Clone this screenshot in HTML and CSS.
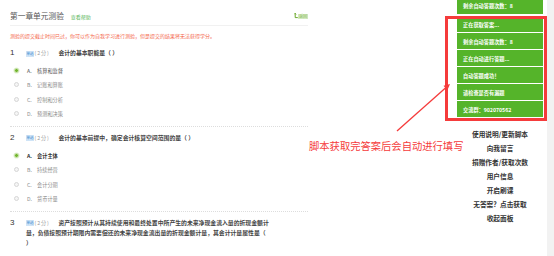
FILE: index.html
```html
<!DOCTYPE html>
<html lang="zh-CN">
<head>
<meta charset="utf-8">
<title>第一章单元测验</title>
<link rel="stylesheet" href="styles.css">
</head>
<body>
<div class="page">
  <main class="main">
    <div class="title-row">
      <h1 class="title">第一章单元测验</h1>
      <a class="help">查看帮助</a>
      <a class="back">
        <svg class="back-icon" width="4" height="6" viewBox="0 0 4 6"><path d="M1.2 0.3 V4.6 H3.8 M0.2 1.3 L1.2 0.3 L2.2 1.3" fill="none" stroke="#6aa82a" stroke-width="1"/></svg>
        <span class="back-text">返回</span>
      </a>
    </div>
    <p class="notice">测验的提交截止时间已过，你可以作为自我学习进行测验，但是提交的结果将无法获得学分。</p>

    <section class="question">
      <div class="q-head">
        <span class="q-num">1</span>
        <div class="q-body"><span class="badge"><span class="badge-text">单选</span></span><span class="score">(2分)</span><span class="q-text">会计的基本职能是（ ）</span></div>
      </div>
      <ul class="options">
        <li class="option checked"><span class="radio"></span><span class="letter">A.</span><span>核算和监督</span></li>
        <li class="option"><span class="radio"></span><span class="letter">B.</span><span>记账和算账</span></li>
        <li class="option"><span class="radio"></span><span class="letter">C.</span><span>控制和分析</span></li>
        <li class="option"><span class="radio"></span><span class="letter">D.</span><span>预测和决策</span></li>
      </ul>
    </section>

    <section class="question">
      <div class="q-head">
        <span class="q-num">2</span>
        <div class="q-body"><span class="badge"><span class="badge-text">单选</span></span><span class="score">(2分)</span><span class="q-text">会计的基本前提中，确定会计核算空间范围的是（ ）</span></div>
      </div>
      <ul class="options">
        <li class="option checked strong"><span class="radio"></span><span class="letter">A.</span><span>会计主体</span></li>
        <li class="option"><span class="radio"></span><span class="letter">B.</span><span>持续经营</span></li>
        <li class="option"><span class="radio"></span><span class="letter">C.</span><span>会计分期</span></li>
        <li class="option"><span class="radio"></span><span class="letter">D.</span><span>货币计量</span></li>
      </ul>
    </section>

    <section class="question last">
      <div class="q-head">
        <span class="q-num">3</span>
        <div class="q-body"><span class="badge"><span class="badge-text">单选</span></span><span class="score">(2分)</span><span class="q-text">资产按照预计从其持续使用和最终处置中所产生的未来净现金流入量的折现金额计量，负债按照预计期限内需要偿还的未来净现金流出量的折现金额计量，其会计计量属性是（ ）</span></div>
      </div>
    </section>
  </main>
  <div class="scroll-strip"></div>
</div>

<aside class="panel">
  <div class="msg first">剩余自动答题次数：8</div>
  <div class="msg">正在获取答案...</div>
  <div class="msg">剩余自动答题次数：8</div>
  <div class="msg">正在自动进行答题...</div>
  <div class="msg">自动答题成功！</div>
  <div class="msg">请检查是否有漏题</div>
  <div class="msg">交流群：902070562</div>
  <ul class="menu">
    <li>使用说明/更新脚本</li>
    <li>向我留言</li>
    <li>捐赠作者/获取次数</li>
    <li>用户信息</li>
    <li>开启刷课</li>
    <li>无答案？点击获取</li>
    <li>收起面板</li>
  </ul>
</aside>

<div class="mark-box"></div>
<svg class="mark-arrow" width="554" height="256" viewBox="0 0 554 256">
  <line x1="397" y1="131" x2="446" y2="87.6" stroke="#f53b3b" stroke-width="1.3"/>
  <polygon points="450,84 447.4,90.2 443.5,85.8" fill="#f53b3b"/>
</svg>
<div class="mark-text">脚本获取完答案后会自动进行填写</div>
</body>
</html>
```

FILE: styles.css
```css
* {
  box-sizing: border-box;
  margin: 0;
  padding: 0;
}

html, body {
  width: 554px;
  height: 256px;
  overflow: hidden;
  background: #ffffff;
}

body {
  position: relative;
  font-family: "Noto Sans CJK SC", "Noto Sans", sans-serif;
  color: #333333;
  text-spacing-trim: space-all;
}

.page {
  display: flex;
  height: 256px;
}

.main {
  width: 308px;
  padding-left: 10px;
}

.scroll-strip {
  margin-left: auto;
  width: 7px;
  background: #f2f2f2;
}

/* title */
.title-row {
  display: flex;
  align-items: center;
  height: 26px;
  padding-top: 7px;
  border-bottom: 1px solid #f1f1f1;
}

.title {
  font-size: 7.7px;
  font-weight: normal;
  color: #555555;
  line-height: 18px;
}

.help {
  margin-left: 7px;
  font-size: 5px;
  color: #5cb85c;
}

.back {
  margin-left: auto;
  display: flex;
  align-items: center;
  gap: 0.5px;
}

.back-icon {
  display: block;
}

.back-text {
  font-size: 4px;
  line-height: 5px;
  padding: 0 1px;
  background: #d3e9bf;
  color: #8fc065;
}

.notice {
  font-size: 5px;
  line-height: 10px;
  padding: 5px 0 1px;
  color: #f4664a;
  white-space: nowrap;
}

/* questions */
.question {
  padding: 6px 0 5px;
  border-bottom: 1px dotted #dddddd;
}

.question.last {
  border-bottom: none;
}

.q-head {
  display: flex;
  line-height: 10px;
}

.q-num {
  width: 16px;
  flex: none;
  font-family: "Liberation Sans", Arial, sans-serif;
  font-size: 8px;
  color: #333333;
}

.q-body {
  width: 245px;
  font-size: 5.85px;
  font-weight: bold;
  color: #444444;
}

.badge {
  display: inline-flex;
  align-items: center;
  justify-content: center;
  width: 7.6px;
  height: 6px;
  overflow: hidden;
  background: #cfe4f7;
  vertical-align: -0.5px;
}

.badge-text {
  display: block;
  flex: none;
  font-size: 6px;
  line-height: 6px;
  font-weight: normal;
  color: #4a8fd0;
  white-space: nowrap;
  transform: scale(0.58);
}

.score {
  margin-left: 1px;
  margin-right: 8.6px;
  font-size: 5.2px;
  letter-spacing: 0.9px;
  font-weight: normal;
  color: #9a9a9a;
}

.options {
  list-style: none;
  margin-top: 5.3px;
}

.option {
  display: flex;
  align-items: center;
  height: 14.4px;
  font-size: 5.2px;
  color: #8a8a8a;
}

.radio {
  width: 5px;
  height: 5px;
  margin-left: 3.5px;
  margin-right: 8.5px;
  border-radius: 50%;
  border: 0.8px solid #d6d6d6;
  background: #f5f5f5;
  flex: none;
}

.option.checked {
  color: #555555;
}

.option.checked .radio {
  border: 1px solid #cfe6b4;
  background: #72b52e;
  box-shadow: 0 0 0 0.6px #e4f1d6;
}

.option.strong {
  font-weight: bold;
  color: #333333;
}

.letter {
  width: 10px;
  flex: none;
}

/* helper panel (floating overlay) */
.panel {
  position: absolute;
  left: 457px;
  top: -2.3px;
  width: 86px;
}

.msg {
  height: 16px;
  margin-bottom: 1px;
  padding-left: 6px;
  display: flex;
  align-items: center;
  background: #55b42a;
  color: #ffffff;
  font-size: 5.2px;
  font-weight: bold;
  white-space: nowrap;
}

.msg.first {
  margin-bottom: 2.3px;
}

.menu {
  list-style: none;
  margin-top: 10px;
  text-align: center;
}

.menu li {
  line-height: 14px;
  font-size: 6.7px;
  font-weight: bold;
  color: #333333;
  white-space: nowrap;
}

/* annotation overlays */
.mark-box {
  position: absolute;
  left: 445px;
  top: 16px;
  width: 102px;
  height: 105px;
  border: 3px solid #f53b3b;
}

.mark-arrow {
  position: absolute;
  left: 0;
  top: 0;
  pointer-events: none;
}

.mark-text {
  position: absolute;
  left: 309px;
  top: 139px;
  font-size: 10.3px;
  line-height: 13px;
  color: #f53b3b;
  white-space: nowrap;
}
```
